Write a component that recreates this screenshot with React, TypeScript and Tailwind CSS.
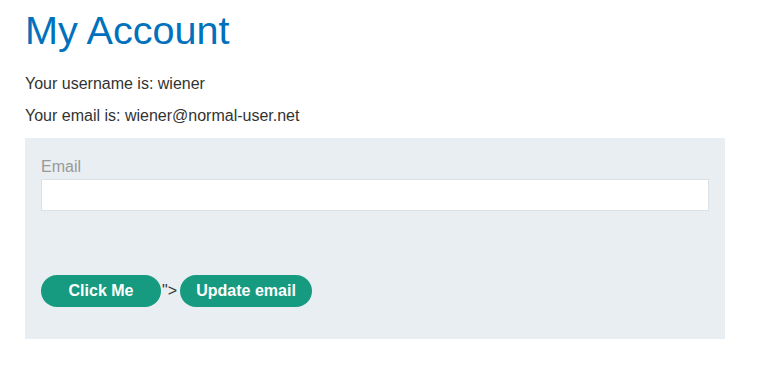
export default function App() {
  return (
    <div className="min-h-[369px] bg-white pl-[25px] text-[#333332]" style={{ fontFamily: '"Liberation Sans", Arial, sans-serif' }}>
      <h1 className="pt-[6px] text-[39.6px] leading-[48px] text-[#0071bc]">My Account</h1>
      <p className="mt-[17.5px] text-[16px] leading-[24px]">Your username is: wiener</p>
      <p className="mt-[8px] text-[16px] leading-[24px]">Your email is: wiener@normal-user.net</p>
      <div className="mt-[10.5px] w-[700px] bg-[#e8eef1] px-[16px] pt-[16.5px] pb-[32px]">
        <label className="block text-[16px] leading-[24px] text-[#999999]">Email</label>
        <div className="mt-[0.5px] h-[32px] w-[668px] border border-[#dde1e3] bg-white" />
        <div className="mt-[64px] flex h-[32px] items-center">
          <button className="h-[32px] w-[120px] rounded-[16px] bg-[#179b80] text-[16px] font-bold text-white">Click Me</button>
          <span className="ml-[1px] text-[16px] leading-[24px]">"&gt;</span>
          <button className="ml-[3px] h-[32px] w-[132px] rounded-[16px] bg-[#179b80] text-[16px] font-bold text-white">Update email</button>
        </div>
      </div>
    </div>
  );
}
